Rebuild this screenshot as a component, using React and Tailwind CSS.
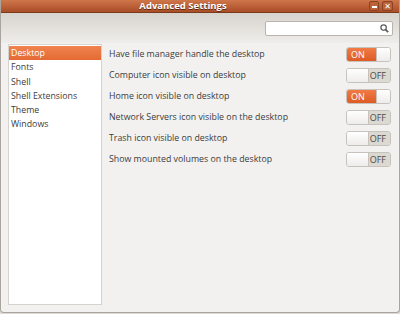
const font = { fontFamily: '"Open Sans", "DejaVu Sans", sans-serif' };

const categories = ['Desktop', 'Fonts', 'Shell', 'Shell Extensions', 'Theme', 'Windows'];

const settings = [
  { label: 'Have file manager handle the desktop', on: true },
  { label: 'Computer icon visible on desktop', on: false },
  { label: 'Home icon visible on desktop', on: true },
  { label: 'Network Servers icon visible on the desktop', on: false },
  { label: 'Trash icon visible on desktop', on: false },
  { label: 'Show mounted volumes on the desktop', on: false },
];

function Toggle({ on }) {
  if (on) {
    return (
      <div className="flex w-[45px] h-[15px] rounded-[3px] border border-[#c7c2bb] overflow-hidden">
        <div className="w-[29px] bg-gradient-to-b from-[#f07a45] to-[#de5b24] text-white text-[9px] leading-[13px] pl-[4px] font-medium">ON</div>
        <div className="flex-1 bg-gradient-to-b from-[#ffffff] to-[#eeeceb] border-l border-[#c7c2bb]" />
      </div>
    );
  }
  return (
    <div className="flex w-[45px] h-[15px] rounded-[3px] border border-[#c7c2bb] overflow-hidden">
      <div className="w-[22px] bg-gradient-to-b from-[#ffffff] to-[#eeeceb] border-r border-[#c7c2bb]" />
      <div className="flex-1 bg-[#dcd8d2] text-[#4a4a4a] text-[9px] leading-[13px] text-right pr-[4px]">OFF</div>
    </div>
  );
}

export default function App() {
  return (
    <div className="w-[400px] h-[314px] bg-[#dcdad5]" style={font}>
      <div className="w-[400px] h-[313px] flex flex-col bg-[#f2f1f0] border-x border-b border-[#a9a59e] rounded-b-[4px] overflow-hidden">
        {/* Title bar */}
        <div className="relative h-[13px] bg-gradient-to-b from-[#d0764b] to-[#a84d26] border-b border-[#7a3a1c] flex items-center justify-center">
          <span className="text-white text-[9.5px] font-bold leading-none ml-[-34px] [text-shadow:0_1px_0_#5a2a10]">Advanced Settings</span>
          <div className="absolute right-[6px] top-[1px] flex gap-[3px]">
            <div className="w-[10px] h-[10px] border border-[#8a4424] rounded-[2px] bg-[#bb6338] flex items-end justify-center pb-[2px]">
              <div className="w-[5px] h-[2px] bg-white" />
            </div>
            <div className="w-[11px] h-[10px] border border-[#8a4424] rounded-[2px] bg-[#bb6338] flex items-center justify-center text-white text-[8px] font-bold leading-none">✕</div>
          </div>
        </div>
        {/* Toolbar */}
        <div className="h-[30px] bg-gradient-to-b from-[#d7d3cd] to-[#efedeb] flex items-center justify-end pr-[6px]">
          <div className="w-[128px] h-[15px] bg-white border border-[#b9b4ad] rounded-[2px] flex items-center justify-end pr-[3px]">
            <svg width="9" height="9" viewBox="0 0 10 10" fill="none" stroke="#5e5e5e" strokeWidth="1.4">
              <circle cx="4" cy="4" r="3" />
              <path d="M6.2 6.2 L9 9" strokeWidth="2" />
            </svg>
          </div>
        </div>
        {/* Body */}
        <div className="flex flex-1 pl-[7px] pb-[7px]">
          <div className="w-[94px] mt-px bg-white border border-[#d6d2cc] pt-px">
            {categories.map((c, i) => (
              <div
                key={c}
                className={`h-[14.3px] px-[2px] text-[8.8px] leading-[15px] ${
                  i === 0 ? 'bg-gradient-to-b from-[#f0834f] to-[#e46a33] text-white' : 'text-[#3c3c3c]'
                }`}
              >
                {c}
              </div>
            ))}
          </div>
          <div className="flex-1 pl-[7px] pr-[8px] pt-px">
            {settings.map((s) => (
              <div key={s.label} className="h-[21px] flex items-center justify-between">
                <span className="text-[8.8px] text-[#3c3c3c]">{s.label}</span>
                <Toggle on={s.on} />
              </div>
            ))}
          </div>
        </div>
      </div>
    </div>
  );
}
